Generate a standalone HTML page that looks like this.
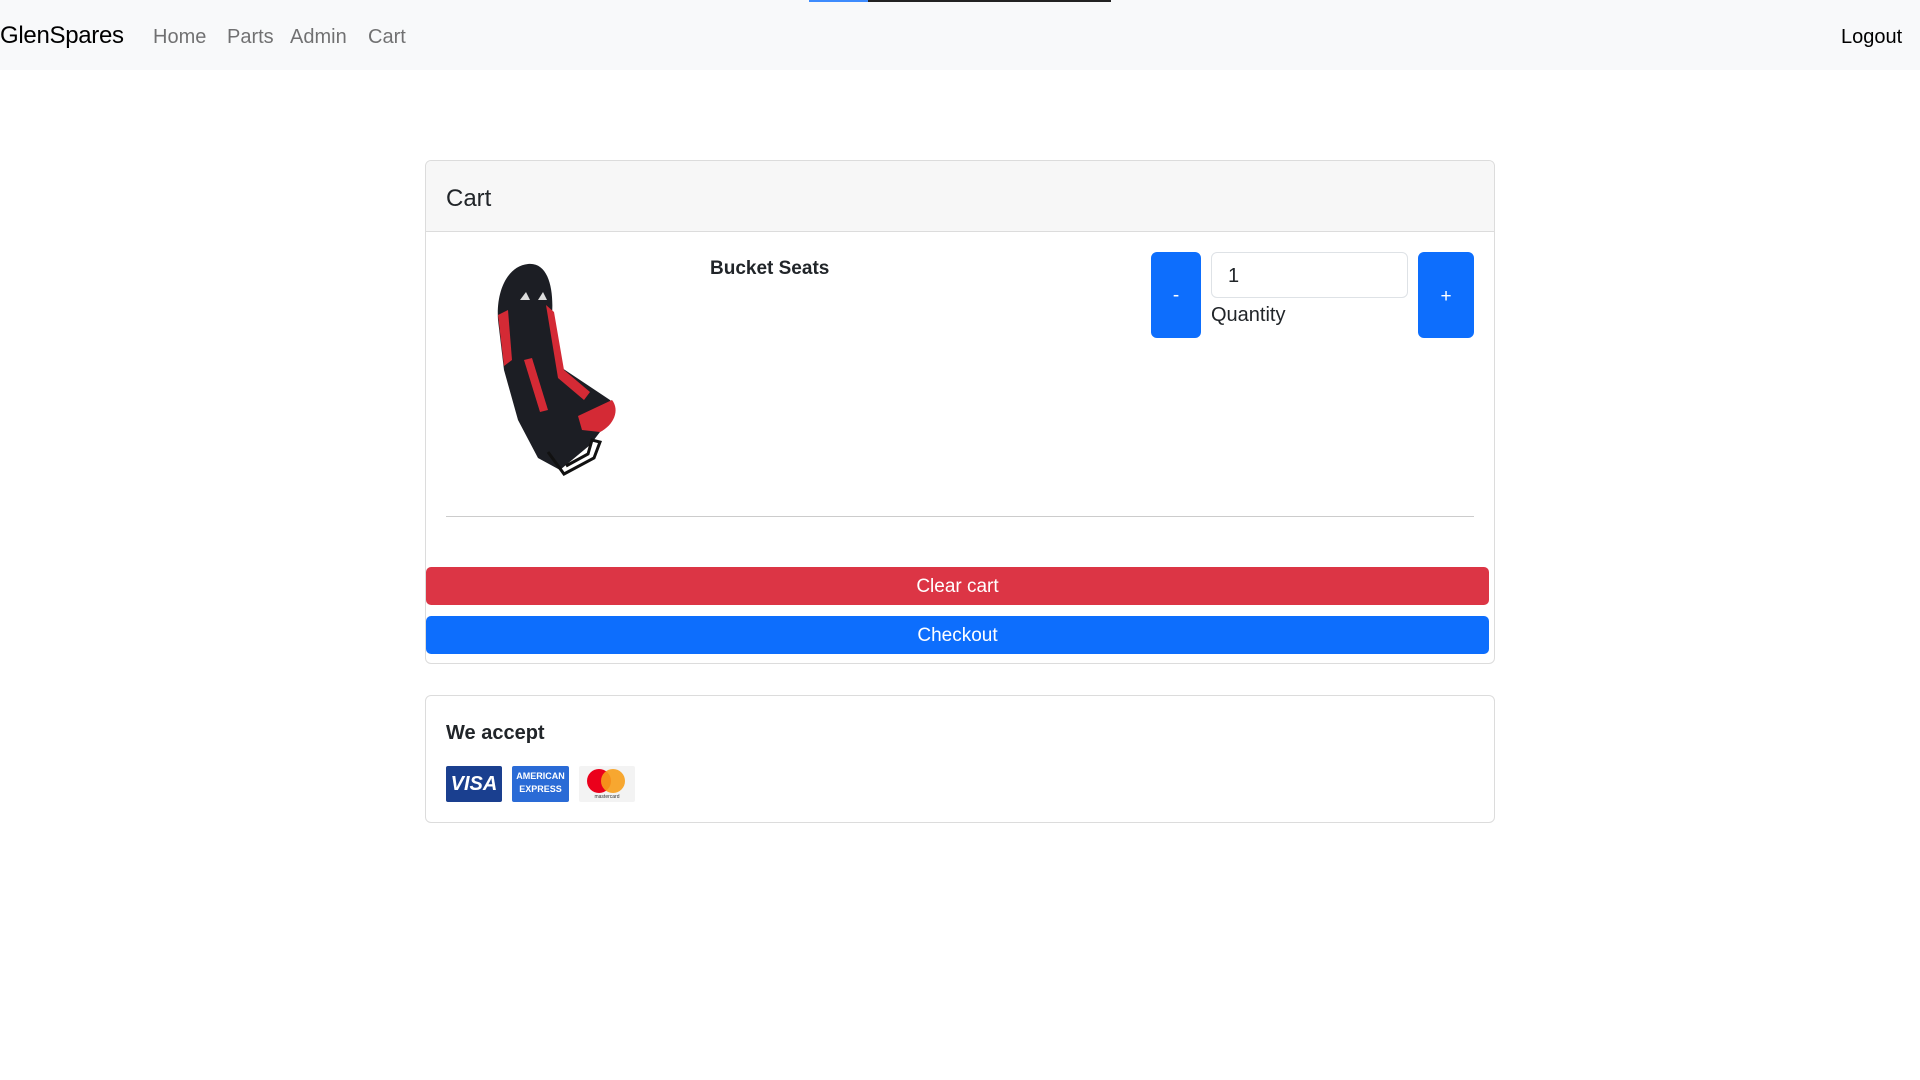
<!DOCTYPE html>
<html><head><meta charset="utf-8"><style>
*{box-sizing:border-box;margin:0;padding:0}
body{width:1920px;height:1080px;background:#fff;font-family:"Liberation Sans",sans-serif;color:#212529;position:relative;overflow:hidden}
.abs{position:absolute}
nav{position:absolute;left:0;top:0;width:1920px;height:70px;background:#f8f9fa}
.brand{left:0;top:22px;font-size:24px;color:#000;letter-spacing:-0.3px}
.nl{top:26px;font-size:20px;color:rgba(0,0,0,.55)}
.card{border:1px solid #dcdcdc;border-radius:6px}
.btn{color:#fff;font-size:19px;text-align:center;border-radius:5px}
</style></head><body>
<nav>
<div class="abs brand">GlenSpares</div>
<div class="abs nl" style="left:153px">Home</div>
<div class="abs nl" style="left:227px">Parts</div>
<div class="abs nl" style="left:290px">Admin</div>
<div class="abs nl" style="left:368px">Cart</div>
<div class="abs nl" style="left:1841px;color:#000">Logout</div>
</nav>
<div class="abs" style="left:809px;top:0;width:302px;height:2px;background:#222;z-index:5"></div>
<div class="abs" style="left:809px;top:0;width:59px;height:2px;background:#3d8bfd;z-index:6"></div>
<div class="abs card" style="left:425px;top:160px;width:1070px;height:504px">
<div class="abs" style="left:0;top:0;width:1068px;height:71px;background:#f7f7f7;border-bottom:1px solid #dcdcdc;border-radius:6px 6px 0 0"></div>
<div class="abs" style="left:20px;top:24px;font-size:24px">Cart</div>
</div>
<svg class="abs" style="left:490px;top:260px" width="160" height="220" viewBox="0 0 160 220">
<path d="M8 60 C6 30 18 6 38 4 C58 2 64 28 62 55 L72 108 L120 140 C130 150 122 165 110 172 L100 185 L70 210 L48 198 L28 160 L14 110 Z" fill="#1c1e24"/>
<path d="M8 55 L18 50 L22 100 L14 106 Z" fill="#d42a35"/>
<path d="M56 45 L64 52 L74 110 L100 132 L94 140 L68 118 Z" fill="#d42a35"/>
<path d="M88 156 L122 140 C130 150 124 165 110 172 L92 170 Z" fill="#d42a35"/>
<path d="M34 100 L42 98 L58 150 L50 152 Z" fill="#d42a35"/>
<path d="M58 192 L74 214 L104 198 L110 182 L102 180 L98 194 L76 206" fill="none" stroke="#111" stroke-width="3"/>
<path d="M30 40 l6 -8 l4 8 Z M48 40 l5 -8 l4 8 Z" fill="#ddd"/>
</svg>
<div class="abs" style="left:710px;top:258px;font-size:19px;font-weight:bold">Bucket Seats</div>
<div class="abs btn" style="left:1151px;top:252px;width:50px;height:86px;background:#0d6efd;line-height:88px;border-radius:6px">-</div>
<div class="abs" style="left:1211px;top:252px;width:197px;height:46px;border:1px solid #dee2e6;border-radius:6px;font-size:20px;padding:12px 16px">1</div>
<div class="abs" style="left:1211px;top:304px;font-size:20px">Quantity</div>
<div class="abs btn" style="left:1418px;top:252px;width:56px;height:86px;background:#0d6efd;line-height:90px;border-radius:6px">+</div>
<div class="abs" style="left:446px;top:516px;width:1028px;height:1px;background:#ccc"></div>
<div class="abs btn" style="left:426px;top:567px;width:1063px;height:38px;background:#dc3545;line-height:40px">Clear cart</div>
<div class="abs btn" style="left:426px;top:616px;width:1063px;height:38px;background:#0d6efd;line-height:40px">Checkout</div>
<div class="abs card" style="left:425px;top:695px;width:1070px;height:128px"></div>
<div class="abs" style="left:446px;top:722px;font-size:20px;font-weight:bold">We accept</div>
<div class="abs" style="left:446px;top:766px;width:56px;height:36px;background:#1a3f8f;border-radius:2px;color:#fff;font-weight:bold;font-style:italic;font-size:20px;text-align:center;line-height:36px">VISA</div>
<div class="abs" style="left:512px;top:766px;width:57px;height:36px;background:#2a6bd6;border-radius:2px;color:#fff;font-size:9px;font-weight:bold;text-align:center;line-height:13px;padding-top:4px">AMERICAN<br>EXPRESS</div>
<div class="abs" style="left:579px;top:766px;width:56px;height:36px;background:#f3f3f3;border-radius:2px"></div>
<div class="abs" style="left:587px;top:769px;width:24px;height:24px;border-radius:50%;background:#eb001b"></div>
<div class="abs" style="left:601px;top:769px;width:24px;height:24px;border-radius:50%;background:#f79e1b;opacity:.9"></div>
<div class="abs" style="left:579px;top:794px;width:56px;font-size:5px;text-align:center;color:#333">mastercard</div>
</body></html>
